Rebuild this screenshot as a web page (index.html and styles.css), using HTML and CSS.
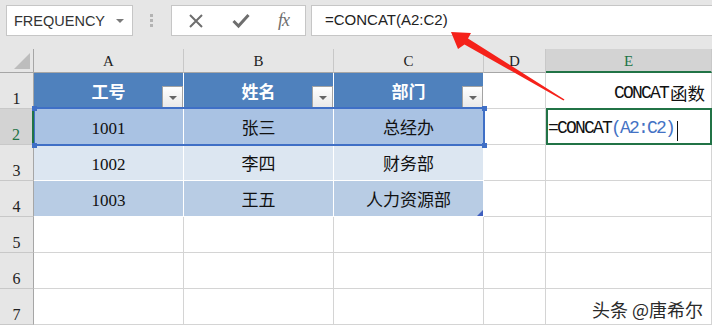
FILE: index.html
```html
<!DOCTYPE html>
<html lang="zh-CN">

<head>
  <meta charset="UTF-8">
  <meta name="viewport" content="width=device-width, initial-scale=1.0">
  <title>CONCAT</title>
  <link rel="stylesheet" href="styles.css">
</head>

<body>
  <div class="toolbar">
    <div class="name-box">
      <span>FREQUENCY</span>
      <span class="name-box_caret"></span>
    </div>
    <div class="grip"><i></i><i></i><i></i></div>
    <div class="fx-buttons">
      <svg width="16" height="16" viewBox="0 0 16 16">
        <path d="M2 2 L14 14 M14 2 L2 14" stroke="#6e6e6e" stroke-width="2" fill="none" />
      </svg>
      <svg width="18" height="16" viewBox="0 0 18 16">
        <path d="M1.5 8 L6.5 13 L16.5 2" stroke="#6e6e6e" stroke-width="3" fill="none" />
      </svg>
      <span class="fx">fx</span>
    </div>
    <div class="formula">=CONCAT(A2:C2)</div>
  </div>

  <div class="sheet">
    <!-- column headers -->
    <div class="corner"><span class="corner_tri"></span></div>
    <div class="col-head">A</div>
    <div class="col-head">B</div>
    <div class="col-head">C</div>
    <div class="col-head">D</div>
    <div class="col-head col-head--active">E</div>

    <!-- row 1 -->
    <div class="row-head">1</div>
    <div class="cell th">工号<span class="filter"></span></div>
    <div class="cell th">姓名<span class="filter"></span></div>
    <div class="cell th">部门<span class="filter"></span></div>
    <div class="cell"></div>
    <div class="cell cell--title">CONCAT<span class="cjk">函数</span></div>

    <!-- row 2 -->
    <div class="row-head row-head--active">2</div>
    <div class="cell td td--sel">1001</div>
    <div class="cell td td--sel">张三</div>
    <div class="cell td td--sel">总经办</div>
    <div class="cell"></div>
    <div class="cell cell--edit">=CONCAT<span class="ref">(A2:C2)</span><span class="caret"></span></div>

    <!-- row 3 -->
    <div class="row-head">3</div>
    <div class="cell td td--light">1002</div>
    <div class="cell td td--light">李四</div>
    <div class="cell td td--light">财务部</div>
    <div class="cell"></div>
    <div class="cell"></div>

    <!-- row 4 -->
    <div class="row-head">4</div>
    <div class="cell td">1003</div>
    <div class="cell td">王五</div>
    <div class="cell td">人力资源部<span class="resize"></span></div>
    <div class="cell"></div>
    <div class="cell"></div>

    <div class="row-head">5</div>
    <div class="cell"></div>
    <div class="cell"></div>
    <div class="cell"></div>
    <div class="cell"></div>
    <div class="cell"></div>

    <div class="row-head">6</div>
    <div class="cell"></div>
    <div class="cell"></div>
    <div class="cell"></div>
    <div class="cell"></div>
    <div class="cell"></div>

    <div class="row-head">7</div>
    <div class="cell"></div>
    <div class="cell"></div>
    <div class="cell"></div>
    <div class="cell"></div>
    <div class="cell"></div>

    <!-- range highlight A2:C2 -->
    <div class="range">
      <i class="range_handle range_handle--tl"></i>
      <i class="range_handle range_handle--tr"></i>
      <i class="range_handle range_handle--bl"></i>
      <i class="range_handle range_handle--br"></i>
    </div>
  </div>

  <svg class="arrow" width="712" height="327" viewBox="0 0 712 327">
    <polygon points="451,32 471,33 468,38.5 564.5,99.5 563.5,100.5 464.5,44.5 458,49" fill="#f5211a" />
  </svg>

  <div class="watermark">头条 @唐希尔</div>
</body>

</html>
```

FILE: styles.css
```css
* {
  box-sizing: border-box;
  padding: 0;
  margin: 0;
}

html {
  font-family: 'Liberation Sans', sans-serif;
  color: #222;
}

body {
  position: relative;
  width: 712px;
  height: 327px;
  overflow: hidden;
  background-color: #ffffff;
}

/* toolbar */

.toolbar {
  display: flex;
  align-items: flex-start;
  height: 49px;
  padding: 5px 0 0 6px;
  background-color: #e6e6e6;
}

.name-box {
  display: flex;
  align-items: center;
  justify-content: space-between;
  width: 127px;
  height: 31px;
  padding: 0 8px 0 7px;
  background-color: #ffffff;
  border: 1px solid #c6c6c6;
  font-size: 14.5px;
  color: #333;
}

.name-box_caret {
  width: 0;
  height: 0;
  border-left: 4px solid transparent;
  border-right: 4px solid transparent;
  border-top: 4px solid #7a7a7a;
}

.grip {
  display: flex;
  flex-direction: column;
  gap: 2px;
  margin: 9px 18px 0 17px;
}

.grip i {
  display: block;
  width: 3px;
  height: 3px;
  background-color: #b3b3b3;
}

.fx-buttons {
  display: flex;
  align-items: center;
  justify-content: space-around;
  width: 135px;
  height: 31px;
  padding: 0 2px;
  background-color: #ffffff;
  border: 1px solid #c6c6c6;
}

.fx {
  font-family: 'Liberation Serif', serif;
  font-style: italic;
  font-size: 18px;
  color: #6e6e6e;
  letter-spacing: -1px;
}

.formula {
  flex: 1;
  height: 31px;
  margin: 0 -2px 0 5px;
  padding: 5px 0 0 13px;
  background-color: #ffffff;
  border: 1px solid #c6c6c6;
  font-size: 15px;
  color: #222;
}

/* sheet */

.sheet {
  position: relative;
  display: grid;
  grid-template-columns: 34px 150px 150px 150px 62px 166px;
  grid-template-rows: 24px repeat(7, 36px);
  font-family: 'Liberation Serif', 'Noto Sans CJK SC', serif;
}

.corner {
  position: relative;
  background-color: #e6e6e6;
  border-right: 1px solid #a6a6a6;
  border-bottom: 1px solid #a6a6a6;
}

.corner_tri {
  position: absolute;
  right: 3px;
  bottom: 3px;
  width: 0;
  height: 0;
  border-left: 16px solid transparent;
  border-bottom: 16px solid #bdbdbd;
}

.col-head {
  display: flex;
  align-items: center;
  justify-content: center;
  padding-top: 2px;
  background-color: #e6e6e6;
  border-right: 1px solid #c8c8c8;
  border-bottom: 1px solid #a6a6a6;
  font-size: 15px;
  color: #222;
}

.col-head--active {
  background-color: #d3d3d3;
  border-bottom: 2px solid #217346;
  color: #217346;
}

.row-head {
  display: flex;
  align-items: flex-end;
  justify-content: center;
  background-color: #e6e6e6;
  border-right: 1px solid #a6a6a6;
  border-bottom: 1px solid #c8c8c8;
  font-size: 16px;
  line-height: 18px;
  color: #222;
}

.row-head--active {
  background-color: #d3d3d3;
  border-right: 2px solid #217346;
  color: #217346;
}

.cell {
  position: relative;
  display: flex;
  align-items: flex-end;
  justify-content: center;
  padding-bottom: 5px;
  border-right: 1px solid #d4d4d4;
  border-bottom: 1px solid #d4d4d4;
  font-size: 17px;
  line-height: 20px;
  color: #111;
}

.th {
  background-color: #4f81bd;
  border-color: #ffffff;
  color: #ffffff;
  font-weight: bold;
}

.td {
  background-color: #b8cce4;
  border-color: #ffffff;
}

.td--sel {
  background-color: #a9c2e3;
}

.td--light {
  background-color: #dce6f1;
}

.filter {
  position: absolute;
  right: 0;
  bottom: 0;
  width: 21px;
  height: 22px;
  border: 1px solid #a3a3a3;
  background: linear-gradient(#ffffff, #e9e9e9);
}

.filter::after {
  content: "";
  position: absolute;
  left: 6px;
  top: 9px;
  border-left: 4px solid transparent;
  border-right: 4px solid transparent;
  border-top: 4px solid #666;
}

.resize {
  position: absolute;
  right: 0;
  bottom: 0;
  width: 0;
  height: 0;
  border-left: 6px solid transparent;
  border-bottom: 6px solid #3f5fbf;
}

.cell--title {
  justify-content: flex-start;
  padding-left: 68px;
  font-family: 'Liberation Mono', 'Noto Sans CJK SC', monospace;
  font-size: 18px;
  letter-spacing: -1.8px;
  color: #111;
}

.cjk {
  font-family: 'Noto Sans CJK SC', sans-serif;
  font-size: 17.5px;
  letter-spacing: 0;
  margin-left: 2px;
}

.cell--edit {
  justify-content: flex-start;
  margin-top: -1px;
  padding: 0 0 5px 0;
  border: 2px solid #217346;
  font-family: 'Liberation Mono', monospace;
  font-size: 18px;
  letter-spacing: -1.8px;
  color: #111;
}

.ref {
  color: #4472c4;
}

.caret {
  display: inline-block;
  width: 1px;
  height: 20px;
  margin: 0 0 -3px 3px;
  background-color: #111;
}

/* range highlight, laid over A2:C2 */

.range {
  position: absolute;
  grid-row: 3 / 4;
  grid-column: 2 / 5;
  top: -2px;
  left: 0;
  right: -1px;
  bottom: -1px;
  border: 2px solid #3f6fc6;
  border-left-width: 1px;
}

.range_handle {
  position: absolute;
  width: 5px;
  height: 5px;
  background-color: #3f6fc6;
}

.range_handle--tl {
  left: -3px;
  top: -3px;
}

.range_handle--tr {
  right: -4px;
  top: -3px;
}

.range_handle--bl {
  left: -3px;
  bottom: -4px;
}

.range_handle--br {
  right: -4px;
  bottom: -4px;
}

/* overlays */

.arrow {
  position: absolute;
  top: 0;
  left: 0;
  pointer-events: none;
}

.watermark {
  position: absolute;
  right: 9px;
  bottom: 8px;
  font-family: 'Noto Sans CJK SC', sans-serif;
  font-size: 18px;
  line-height: 20px;
  color: #2a2a2a;
  text-shadow: 0 0 2px #ffffff, 0 0 2px #ffffff;
}
```
